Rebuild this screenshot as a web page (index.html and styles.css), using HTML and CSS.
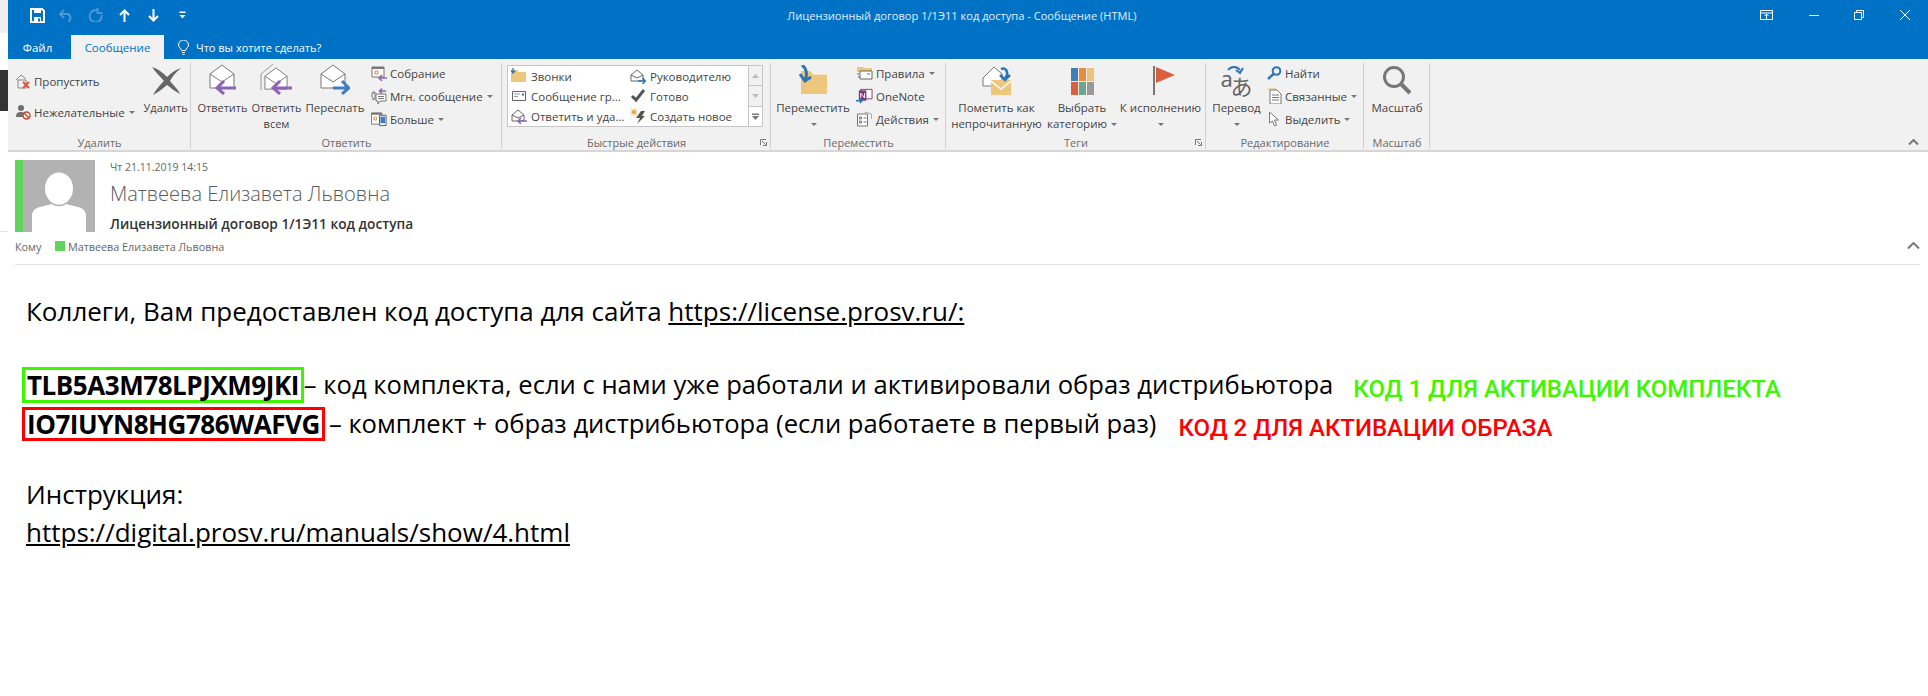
FILE: index.html
```html
<!DOCTYPE html>
<html lang="ru">

<head>
    <meta charset="UTF-8">
    <title>Лицензионный договор 1/1Э11 код доступа - Сообщение (HTML)</title>
    <link rel="stylesheet" href="styles.css">
</head>

<body>
    <!--Icons used more than once-->
    <svg class="defs" width="0" height="0">
        <symbol id="env" viewBox="0 0 26 26">
            <path d="M1 10 13 1l12 9v14H1z" fill="#fff" stroke="#777"/>
            <path d="M1 10l12 8 12-8" fill="none" stroke="#777"/>
        </symbol>
        <symbol id="launcher" viewBox="0 0 7 7">
            <path d="M.5 6V.5H6M2 2l3.500 3.500M6.500 3v3.500H3" fill="none" stroke="#777"/>
        </symbol>
    </svg>

    <div class="edge">
        <div class="edge-top"></div>
        <div class="edge-gap"></div>
        <div class="edge-dark"></div>
        <div class="edge-rest"></div>
    </div>

    <div class="window">
        <header class="titlebar">
            <div class="qat">
                <svg width="15" height="15" viewBox="0 0 15 15"><path d="M1 1h11l2 2v11H1z" fill="none" stroke="#fff" stroke-width="2"/><path d="M4 1h7v4H4zM4 9h7v5H4z" fill="#fff"/><path d="M8 10.500h2v3H8z" fill="#0072c6"/></svg>
                <svg width="15" height="13" viewBox="0 0 15 13"><path d="M1 5h8a4.500 4.500 0 0 1 0 8M5 1 1 5l4 4" fill="none" stroke="#4f96d2" stroke-width="2"/></svg>
                <svg width="15" height="14" viewBox="0 0 14 14"><path d="M9 2.500A6 6 0 1 0 13 7M9 0v5h5" fill="none" stroke="#4f96d2" stroke-width="2"/></svg>
                <svg width="15" height="13" viewBox="-2 0 15 13"><path d="M5.500 13V2M1 6l4.500-4.500L10 6" fill="none" stroke="#fff" stroke-width="2"/></svg>
                <svg width="15" height="13" viewBox="-2 0 15 13"><path d="M5.500 0v11M1 7l4.500 4.500L10 7" fill="none" stroke="#fff" stroke-width="2"/></svg>
                <svg width="15" height="8" viewBox="-3.500 0 15 8"><path d="M1 .5h6V2H1zM1 4h6L4 7.500z" fill="#fff"/></svg>
            </div>
            <div class="title">Лицензионный договор 1/1Э11 код доступа - Сообщение (HTML)</div>
            <div class="controls">
                <svg width="13" height="10" viewBox="0 0 13 10"><path d="M.5.500h12v9H.5zM.5 3h12M6.500 9.500V4.500M4.500 6l2-2 2 2" fill="none" stroke="#fff"/></svg>
                <svg width="10" height="1" viewBox="0 0 10 1"><path d="M0 .5h10" stroke="#fff"/></svg>
                <svg width="10" height="10" viewBox="0 0 10 10"><path d="M.5 2.500h7v7h-7zM2.500 2.500v-2h7v7h-2" fill="none" stroke="#fff"/></svg>
                <svg width="10" height="10" viewBox="0 0 10 10"><path d="M0 0l10 10M10 0 0 10" stroke="#fff"/></svg>
            </div>
        </header>

        <nav class="tabs">
            <span class="tab">Файл</span>
            <span class="tab active">Сообщение</span>
            <span class="tell">
                <svg width="11" height="15" viewBox="0 0 11 15"><path d="M3.500 10.500C3 8 .5 7.500.5 5a5 5 0 0 1 10 0c0 2.500-2.500 3-3 5.500zM4 12.500h3M4.500 14.500h2" fill="none" stroke="#fff"/></svg>
                Что вы хотите сделать?
            </span>
        </nav>

        <section class="ribbon">
            <div class="group g-delete">
                <div class="group-body">
                    <div class="small-col">
                        <div class="small">
                            <svg width="16" height="16" viewBox="0 0 16 16"><path d="M1 7l5-5 5 4M3 7h8v8H3z" fill="none" stroke="#888"/><path d="M8 9l6 6M14 9l-6 6" stroke="#d9593d" stroke-width="2"/></svg>
                            Пропустить
                        </div>
                        <div class="small">
                            <svg width="16" height="16" viewBox="0 0 16 16"><circle cx="6" cy="4" r="3" fill="#6f6f6f"/><path d="M1 13c0-4 2-5 5-5s4 1 4 2v3z" fill="#6f6f6f"/><circle cx="11.500" cy="11.500" r="3.500" fill="#fff" stroke="#c8492c" stroke-width="1.500"/><path d="M9 9l5 5" stroke="#c8492c" stroke-width="1.500"/></svg>
                            Нежелательные <i class="caret"></i>
                        </div>
                    </div>
                    <div class="big b-delete">
                        <div class="big-icon">
                            <svg width="30" height="29" viewBox="0 0 30 29"><path d="M1 1c7 2 12 7 15 10C20 7 24 4 30 2c-5 4-9 9-11 13 3 4 8 8 10 13-6-3-10-7-13-9-4 3-8 7-14 10 3-6 8-11 11-14C9 10 4 6 1 1z" fill="#666"/></svg>
                        </div>
                        <span>Удалить</span>
                    </div>
                </div>
                <div class="group-label">Удалить</div>
            </div>

            <div class="group g-respond">
                <div class="group-body">
                    <div class="big b-reply">
                        <div class="big-icon">
                            <svg width="27" height="31" viewBox="0 0 27 31"><use href="#env" width="26" height="26"/><path d="M27 25H9M15 18l-7 7 7 6" transform="translate(0 -1)" fill="none" stroke="#8e63b5" stroke-width="3"/></svg>
                        </div>
                        <span>Ответить</span>
                    </div>
                    <div class="big b-replyall">
                        <div class="big-icon">
                            <svg width="33" height="31" viewBox="0 0 33 31"><path d="M1 26V10L13 0" fill="none" stroke="#999"/><use href="#env" x="4" y="3" width="24" height="24"/><path d="M32 25H14M20 18l-7 7 7 6" transform="translate(0 -1)" fill="none" stroke="#8e63b5" stroke-width="3"/></svg>
                        </div>
                        <span>Ответить<br>всем</span>
                    </div>
                    <div class="big b-forward">
                        <div class="big-icon">
                            <svg width="30" height="31" viewBox="0 0 30 31"><use href="#env" width="26" height="26"/><path d="M13 24h15M22 17l7 7-7 6" fill="none" stroke="#3f7fbf" stroke-width="3"/></svg>
                        </div>
                        <span>Переслать</span>
                    </div>
                    <div class="small-col three">
                        <div class="small">
                            <svg width="16" height="16" viewBox="0 0 16 16"><path d="M1 2h12v10H1z" fill="#fff" stroke="#777"/><path d="M1 2h12v2H1z" fill="#777"/><path d="M4 6h3v3H4z" fill="none" stroke="#e2883a"/><path d="M16 13H9M11 10l-3 3 3 3" fill="none" stroke="#8e63b5" stroke-width="1.500"/></svg>
                            Собрание
                        </div>
                        <div class="small">
                            <svg width="16" height="16" viewBox="0 0 16 16"><path d="M1 5h2M1 5a2 2 0 0 1 2-1h1v7H3l-1 1V10a2 2 0 0 1-1-2z" fill="none" stroke="#777"/><path d="M5 6h10v7H9l-2 3v-3H5z" fill="#fff" stroke="#777"/><path d="M7 8.500h6M7 10.500h6" stroke="#777"/><path d="M15 3H9M11 .5 8.500 3 11 5.500" fill="none" stroke="#8e63b5" stroke-width="1.500"/></svg>
                            Мгн. сообщение <i class="caret"></i>
                        </div>
                        <div class="small">
                            <svg width="16" height="16" viewBox="0 0 17 16"><path d="M.5 1.500h11v12H.5z" fill="#fff" stroke="#777"/><path d="M.5 1.500h11v2H.5z" fill="#777"/><path d="M3 6h3v3H3z" fill="none" stroke="#e2883a"/><path d="M9 4h7v11H9z" fill="#fff" stroke="#555"/><path d="M10 5.500h5v7h-5z" fill="#3f7fbf"/></svg>
                            Больше <i class="caret"></i>
                        </div>
                    </div>
                </div>
                <div class="group-label">Ответить</div>
            </div>

            <div class="group g-quick">
                <div class="gallery">
                    <div class="gallery-items">
                        <div class="quick">
                            <svg width="16" height="16" viewBox="0 0 16 16"><path d="M0 2h6l2 2h7v10H0z" fill="#eec77e"/><path d="M2 0v4M0 2.500 2 5l2-2.500" fill="none" stroke="#2e75b6" stroke-width="1.300"/></svg>
                            Звонки
                        </div>
                        <div class="quick">
                            <svg width="16" height="16" viewBox="0 0 16 16"><path d="M1 7l6-5 6 5v6H1z" fill="#fff" stroke="#666"/><path d="M1 7l6 3 6-3" fill="none" stroke="#666"/><path d="M8 13h7M12.500 10l3 3-3 3" fill="none" stroke="#2e75b6" stroke-width="1.500"/></svg>
                            Руководителю
                        </div>
                        <div class="quick">
                            <svg width="16" height="16" viewBox="0 0 16 16"><path d="M1.500 3.500h13v9h-13z" fill="#fff" stroke="#666"/><path d="M3 6h6M3 8.500h4" stroke="#999"/><path d="M11 5.500h2v2h-2z" fill="#2e75b6"/></svg>
                            Сообщение гр...
                        </div>
                        <div class="quick">
                            <svg width="16" height="16" viewBox="0 0 16 16"><path d="M2 8l4 4 8-10" fill="none" stroke="#555" stroke-width="3"/></svg>
                            Готово
                        </div>
                        <div class="quick">
                            <svg width="16" height="16" viewBox="0 0 16 16"><path d="M1 7l6-5 6 5v6H1z" fill="#fff" stroke="#666"/><path d="M1 7l6 3 6-3" fill="none" stroke="#666"/><path d="M16 13H8M10 10l-3 3 3 3" fill="none" stroke="#8e63b5" stroke-width="1.500"/></svg>
                            Ответить и уда...
                        </div>
                        <div class="quick">
                            <svg width="16" height="16" viewBox="0 0 16 16"><path d="M11 3h4l-3 5h3l-8 8 3-6H6z" fill="#555"/><circle cx="4" cy="4" r="2" fill="#eea544"/><path d="M4 0v8M0 4h8M1 1l6 6M7 1 1 7" stroke="#eea544" stroke-width=".7"/></svg>
                            Создать новое
                        </div>
                    </div>
                    <div class="gallery-scroll">
                        <span class="arrow"><svg width="7" height="4" viewBox="0 0 7 4"><path d="M3.500 0 7 4H0z" fill="#bbb"/></svg></span>
                        <span class="arrow"><svg width="7" height="4" viewBox="0 0 7 4"><path d="M3.500 4 7 0H0z" fill="#bbb"/></svg></span>
                        <span class="arrow more"><svg width="7" height="7" viewBox="0 0 7 7"><path d="M0 .5h7V2H0zM0 3h7L3.500 7z" fill="#777"/></svg></span>
                    </div>
                </div>
                <div class="group-label">Быстрые действия<svg class="launcher" width="7" height="7"><use href="#launcher"/></svg></div>
            </div>

            <div class="group g-move">
                <div class="group-body">
                    <div class="big b-move">
                        <div class="big-icon">
                            <svg width="29" height="30" viewBox="0 0 29 30"><path d="M2 6h9l3 3h14v20H2z" fill="#eec77e"/><path d="M14 9h14" stroke="#fff"/><path d="M3 0c4 3 6 9 3 15M1 9l5 7 6-4" fill="none" stroke="#2e75b6" stroke-width="3"/></svg>
                        </div>
                        <span>Переместить</span>
                        <i class="caret under"></i>
                    </div>
                    <div class="small-col three">
                        <div class="small">
                            <svg width="17" height="16" viewBox="0 0 17 16"><path d="M1 2h6l1 1h8v4H1z" fill="#eec77e"/><path d="M4 6h12v8H4z" fill="#fff" stroke="#666"/><path d="M1 9h2M2 12h2M11 9h3" stroke="#666"/></svg>
                            Правила <i class="caret"></i>
                        </div>
                        <div class="small">
                            <svg width="17" height="16" viewBox="0 0 18 16"><path d="M5 1h12v10H5z" fill="#fff" stroke="#80397b"/><path d="M3 2h8v11H3z" fill="#80397b"/><path d="M5 10V5l4 5V5" fill="none" stroke="#fff"/><path d="M0 13h6M4 10.500 6.500 13 4 15.500" fill="none" stroke="#2e75b6" stroke-width="1.500"/></svg>
                            OneNote
                        </div>
                        <div class="small">
                            <svg width="17" height="16" viewBox="0 0 16 16"><path d="M1 3h10v12H1z" fill="#fff" stroke="#777"/><path d="M3 6h2v2H3zM3 10h2v2H3zM7 7h3M7 11h3" fill="none" stroke="#777"/><path d="M8 1l7 2v5" fill="none" stroke="#aaa"/></svg>
                            Действия <i class="caret"></i>
                        </div>
                    </div>
                </div>
                <div class="group-label">Переместить</div>
            </div>

            <div class="group g-tags">
                <div class="group-body">
                    <div class="big b-unread">
                        <div class="big-icon">
                            <svg width="30" height="29" viewBox="0 0 30 29"><path d="M1 12 12 1l8 7v12H1z" fill="#fff" stroke="#777"/><path d="M9 14h20v15H9z" fill="#eec77e"/><path d="M9 15l10 8 10-8" fill="none" stroke="#fff" stroke-width="1.500"/><path d="M19 3c6-2 8 5 4 9M18 9l5 5 5-5" fill="none" stroke="#2e75b6" stroke-width="2.500"/></svg>
                        </div>
                        <span>Пометить как<br>непрочитанную</span>
                    </div>
                    <div class="big b-cat">
                        <div class="big-icon">
                            <svg width="23" height="27" viewBox="0 0 23 27"><path d="M0 0h7v13H0z" fill="#3f7fb5"/><path d="M8 0h7v13H8z" fill="#e88d3d"/><path d="M16 0h7v13h-7z" fill="#ebc27e"/><path d="M0 14h7v13H0z" fill="#d9603f"/><path d="M8 14h7v13H8z" fill="#6fa58f"/><path d="M16 14h7v13h-7z" fill="#999"/></svg>
                        </div>
                        <span>Выбрать<br>категорию <i class="caret"></i></span>
                    </div>
                    <div class="big b-flag">
                        <div class="big-icon">
                            <svg class="flag" width="22" height="29" viewBox="0 0 22 29"><path d="M0 0h2v29H0z" fill="#777"/><path d="M3 1l19 8-19 8z" fill="#d9603f"/></svg>
                        </div>
                        <span>К исполнению</span>
                        <i class="caret under"></i>
                    </div>
                </div>
                <div class="group-label">Теги<svg class="launcher" width="7" height="7"><use href="#launcher"/></svg></div>
            </div>

            <div class="group g-edit">
                <div class="group-body">
                    <div class="big b-translate">
                        <div class="big-icon">
                            <div class="translate">
                                <svg width="32" height="12" viewBox="0 0 32 12"><path d="M7 7c3-4 9-4 12 0M15 7l4 3 3-5" fill="none" stroke="#2e75b6" stroke-width="2"/></svg>
                                <span class="glyph-a">a</span>
                                <span class="glyph-jp">あ</span>
                            </div>
                        </div>
                        <span>Перевод</span>
                        <i class="caret under"></i>
                    </div>
                    <div class="small-col three">
                        <div class="small">
                            <svg width="15" height="14" viewBox="0 0 15 14"><circle cx="9.500" cy="5" r="3.800" fill="none" stroke="#2e75b6" stroke-width="2"/><path d="M6.500 8 1 13" stroke="#2e75b6" stroke-width="2.500"/></svg>
                            Найти
                        </div>
                        <div class="small">
                            <svg width="15" height="16" viewBox="0 0 15 16"><path d="M1 1h8v13" fill="none" stroke="#e8b36a"/><path d="M3 2h7l4 4v10H3z" fill="#fff" stroke="#777"/><path d="M5 7h7M5 9.500h7M5 12h7" stroke="#777"/></svg>
                            Связанные <i class="caret"></i>
                        </div>
                        <div class="small">
                            <svg width="15" height="16" viewBox="-1.500 0 15 16"><path d="M1 1v11l3-2 2 5 2-1-2-5h4z" fill="#fff" stroke="#777"/></svg>
                            Выделить <i class="caret"></i>
                        </div>
                    </div>
                </div>
                <div class="group-label">Редактирование</div>
            </div>

            <div class="group g-zoom">
                <div class="group-body">
                    <div class="big b-zoom">
                        <div class="big-icon">
                            <svg width="29" height="29" viewBox="0 0 29 29"><circle cx="11" cy="11" r="9.500" fill="none" stroke="#777" stroke-width="3"/><path d="M18 18l9 9" stroke="#777" stroke-width="4"/></svg>
                        </div>
                        <span>Масштаб</span>
                    </div>
                </div>
                <div class="group-label">Масштаб</div>
            </div>

            <svg class="collapse" width="11" height="6" viewBox="0 0 11 6"><path d="M1 5.500l4.500-4.500L10 5.500" fill="none" stroke="#777" stroke-width="2"/></svg>
        </section>

        <section class="msg-head">
            <div class="msg-top">
                <div class="photo">
                    <svg width="72" height="72" viewBox="0 0 72 72"><circle cx="36" cy="30" r="14" fill="#fff" transform="matrix(1 0 0 1.150 0 -6)"/><path d="M9 72V56c0-5 3-8 8-9l12-3c3 3 11 3 14 0l12 3c5 1 8 4 8 9v16z" fill="#fff"/></svg>
                </div>
                <div class="msg-info">
                    <div class="msg-date">Чт 21.11.2019 14:15</div>
                    <div class="msg-from">Матвеева Елизавета Львовна</div>
                    <div class="msg-subject">Лицензионный договор 1/1Э11 код доступа</div>
                </div>
            </div>
            <div class="msg-to">
                <span class="to-label">Кому</span>
                <i class="to-mark"></i>
                <span>Матвеева Елизавета Львовна</span>
                <svg class="to-collapse" width="13" height="7" viewBox="0 0 13 7"><path d="M1 6.500l5.500-5.500L12 6.500" fill="none" stroke="#777" stroke-width="2"/></svg>
            </div>
        </section>

        <main class="msg-body">
            <p class="line">Коллеги, Вам предоставлен код доступа для сайта <u>https://license.prosv.ru/:</u></p>
            <p class="line row-green"><b class="code green">TLB5A3M78LPJXM9JKI</b><span class="after">– код комплекта, если с нами уже работали и активировали образ дистрибьютора</span><span class="note note-green">КОД 1 ДЛЯ АКТИВАЦИИ КОМПЛЕКТА</span></p>
            <p class="line row-red"><b class="code red">IO7IUYN8HG786WAFVG</b><span class="after after-red">– комплект + образ дистрибьютора (если работаете в первый раз)</span><span class="note note-red">КОД 2 ДЛЯ АКТИВАЦИИ ОБРАЗА</span></p>
            <p class="line gap-top">Инструкция:</p>
            <p class="line"><u>https://digital.prosv.ru/manuals/show/4.html</u></p>
        </main>
    </div>
</body>

</html>
```

FILE: styles.css
```css
* {
    box-sizing: border-box;
}

body {
    margin: 0;
    width: 1928px;
    height: 696px;
    overflow: hidden;
    display: flex;
    background: #fff;
    font-family: "Open Sans", "Noto Sans", sans-serif;
    color: #444;
}

.defs {
    display: none;
}

svg {
    flex-shrink: 0;
}

/* Strip left of the window */
.edge {
    width: 8px;
    display: flex;
    flex-direction: column;
}

.edge-top {
    height: 33px;
    background: #f0f0f0;
}

.edge-gap {
    height: 37px;
}

.edge-dark {
    height: 41px;
    background: #333;
}

.edge-rest {
    height: 121px;
    border-bottom: 1px solid #e6e6e6;
}

.window {
    flex: 1;
    min-width: 0;
}

/* Title bar */
.titlebar {
    height: 35px;
    background: #0072c6;
    display: flex;
    align-items: center;
    padding-bottom: 5px;
}

.qat {
    width: 320px;
    padding-left: 22px;
    display: flex;
    align-items: center;
    gap: 14px;
}

.title {
    width: 1000px;
    margin-left: 134px;
    text-align: center;
    font-size: 11.100px;
    color: #e4eef8;
}

.controls {
    margin-left: auto;
    width: 176px;
    padding: 0 18px 0 8px;
    display: flex;
    align-items: center;
    justify-content: space-between;
}

/* Tabs */
.tabs {
    height: 24px;
    background: #0072c6;
    display: flex;
    align-items: stretch;
    font-size: 11.500px;
    color: #fff;
}

.tab {
    width: 63px;
    padding-right: 4px;
    display: flex;
    align-items: center;
    justify-content: center;
}

.tab.active {
    width: 93px;
    padding-right: 0;
    background: #f1f1f1;
    color: #0072c6;
}

.tell {
    margin-left: 14px;
    display: flex;
    align-items: center;
    gap: 7px;
    font-size: 11px;
}

/* Ribbon */
.ribbon {
    position: relative;
    height: 93px;
    background: #f1f1f1;
    border-bottom: 2px solid #d6d6d6;
    display: flex;
    font-size: 11.500px;
    color: #444;
}

.group {
    position: relative;
    padding-top: 4px;
    display: flex;
    flex-direction: column;
}

.group::after {
    content: "";
    position: absolute;
    right: 0;
    top: 4px;
    bottom: 1px;
    width: 1px;
    background: #d0d0d0;
}

.group-body {
    flex: 1;
    display: flex;
    min-height: 0;
}

.group-label {
    position: relative;
    height: 16px;
    line-height: 18px;
    text-align: center;
    color: #6a6a6a;
    font-size: 11px;
}

.launcher {
    position: absolute;
    right: 4px;
    top: 5px;
}

.g-delete { width: 183px; }
.g-respond { width: 311px; }
.g-quick { width: 269px; }
.g-move { width: 175px; }
.g-tags { width: 260px; }
.g-edit { width: 158px; }
.g-zoom { width: 66px; }

.big {
    display: flex;
    flex-direction: column;
    align-items: center;
    text-align: center;
    line-height: 16px;
}

.big-icon {
    flex-shrink: 0;
    height: 37px;
    padding-bottom: 5px;
    display: flex;
    align-items: flex-end;
    justify-content: center;
}

.big > span {
    white-space: nowrap;
}

.small-col {
    display: flex;
    flex-direction: column;
    gap: 13px;
    padding: 9px 0 0 7px;
}

.small-col.three {
    gap: 5px;
    padding-top: 1px;
}

.small {
    height: 18px;
    display: flex;
    align-items: center;
    gap: 3px;
    white-space: nowrap;
}

.caret {
    display: inline-block;
    margin-left: 1px;
    border: 3px solid transparent;
    border-top: 3px solid #777;
    border-bottom: 0;
    vertical-align: middle;
}

.caret.under {
    margin-top: 7px;
}

.b-delete { width: 44px; margin-left: 9px; font-size: 11px; }
.b-reply { width: 49px; margin-left: 7px; font-size: 11px; }
.b-replyall { width: 49px; margin-left: 5px; font-size: 11px; }
.b-forward { width: 58px; margin-left: 5px; }
.b-move { width: 72px; margin-left: 6px; }
.b-unread { width: 89px; margin-left: 6px; }
.b-cat { width: 68px; margin-left: 7px; }
.b-flag { width: 81px; margin-left: 4px; }
.b-translate { width: 47px; margin-left: 7px; }
.b-zoom { width: 52px; margin-left: 7px; }

.flag {
    margin-left: 6px;
}

.translate {
    position: relative;
    width: 32px;
    height: 32px;
}

.translate svg {
    display: block;
}

.glyph-a,
.glyph-jp {
    position: absolute;
    line-height: 1;
    color: #666;
}

.glyph-a {
    left: 0;
    top: 4px;
    font-family: "Noto Sans", sans-serif;
    font-size: 22px;
}

.glyph-jp {
    left: 10px;
    top: 11px;
    font-family: "Noto Sans CJK JP", sans-serif;
    font-size: 22px;
}

/* Quick steps gallery */
.gallery {
    height: 62px;
    margin: 2px 8px 0 5px;
    background: #fff;
    border: 1px solid #c6c6c6;
    display: flex;
}

.gallery-items {
    flex: 1;
    padding: 0 0 0 3px;
    display: grid;
    grid-template-columns: 119px 1fr;
    grid-auto-rows: 20px;
}

.quick {
    display: flex;
    align-items: center;
    gap: 4px;
    white-space: nowrap;
}

.gallery-scroll {
    width: 14px;
    display: flex;
    flex-direction: column;
    border-left: 1px solid #c6c6c6;
}

.arrow {
    flex: 1;
    display: flex;
    align-items: center;
    justify-content: center;
    background: #f1f1f1;
    border-bottom: 1px solid #c6c6c6;
}

.arrow.more {
    background: #fff;
    border-bottom: 0;
}

.g-quick .group-label {
    margin-top: auto;
}

.collapse {
    position: absolute;
    right: 9px;
    bottom: 5px;
}

/* Message header */
.msg-head {
    padding: 8px 8px 0 7px;
    height: 114px;
}

.msg-top {
    display: flex;
    height: 72px;
}

.photo {
    width: 80px;
    height: 72px;
    background: #b2b2b2;
    border-left: 8px solid #5fd35b;
}

.msg-info {
    margin-left: 15px;
}

.msg-date {
    font-size: 10.500px;
    line-height: 14px;
    color: #666;
}

.msg-from {
    margin-top: 6px;
    font-size: 20px;
    font-weight: 300;
    line-height: 28px;
    color: #5a5a5a;
    white-space: nowrap;
}

.msg-subject {
    margin-top: 7px;
    font-size: 13.700px;
    font-weight: 600;
    line-height: 18px;
    color: #333;
    white-space: nowrap;
}

.msg-to {
    height: 33px;
    padding-top: 6px;
    display: flex;
    align-items: flex-start;
    line-height: 18px;
    font-size: 10.800px;
    color: #666;
    border-bottom: 1px solid #e1e1e1;
}

.to-label {
    width: 40px;
}

.to-mark {
    width: 10px;
    height: 10px;
    margin: 3px 3px 0 0;
    background: #5fd35b;
}

.to-collapse {
    margin: 4px 0 0 auto;
}

/* Message body */
.msg-body {
    padding: 26px 0 0 18px;
    color: #000;
    font-size: 26px;
}

.line {
    margin: 0;
    height: 38px;
    line-height: 38px;
    display: flex;
    align-items: center;
    white-space: pre;
}

.row-green {
    margin-top: 36px;
}

.row-red {
    margin-top: 1px;
}

.gap-top {
    margin-top: 32px;
}

.code {
    height: 36px;
    margin-left: -4px;
    line-height: 30px;
    border: 3px solid;
    padding: 0 2px;
    font-weight: 700;
    letter-spacing: -0.450px;
}

.code.green {
    border-color: #3cf700;
}

.code.red {
    height: 34px;
    line-height: 28px;
    border-color: #ff0000;
}

.after {
    font-size: 25.600px;
}

.after-red {
    margin-left: 4px;
}

.note {
    font-family: Roboto, sans-serif;
    font-weight: 500;
    font-size: 24px;
    margin-top: 8px;
}

.note-green {
    margin-left: 20px;
    color: #3cf700;
}

.note-red {
    margin-left: 22px;
    color: #ff0000;
}
```
